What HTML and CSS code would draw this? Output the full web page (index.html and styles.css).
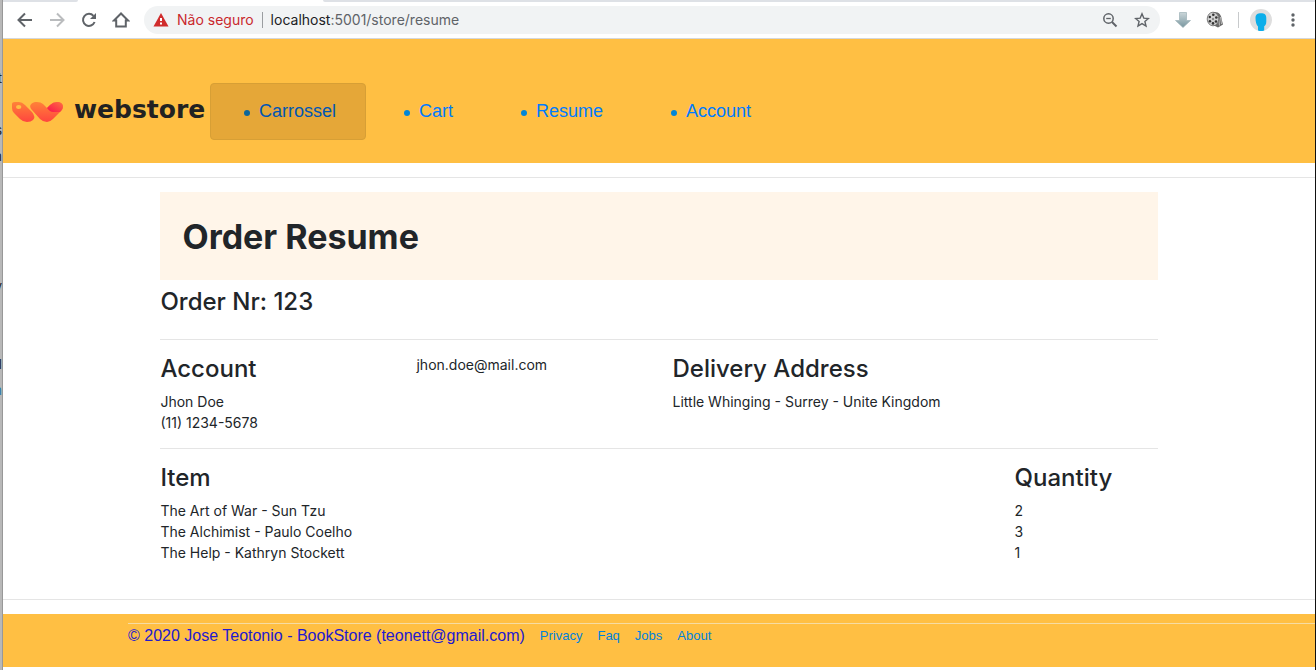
FILE: index.html
```html
<!DOCTYPE html>
<html lang="en">
<head>
<meta charset="utf-8">
<meta name="viewport" content="width=device-width, initial-scale=1">
<title>Order Resume</title>
<link rel="stylesheet" href="styles.css">
</head>
<body>
<div class="desktop">
  <div class="behind" aria-hidden="true">
    <span>t</span><span></span><span>s</span><span>n</span><span></span><span></span><span></span><span></span><span>v</span><span></span><span></span><span>I</span><span class="behind-link">n</span>
  </div>
  <div class="window">
    <div class="tabs"><div class="tab-left"></div><div class="tab-right"></div></div>
    <div class="toolbar">
      <button class="tool" aria-label="Back"><svg width="18" height="18" viewBox="0 0 18 18"><path d="M16 9H3M9 2.500L2.500 9L9 15.500" fill="none" stroke="#5f6368" stroke-width="2"/></svg></button>
      <button class="tool" aria-label="Forward"><svg width="18" height="18" viewBox="0 0 18 18"><path d="M2 9H15M9 2.500L15.500 9L9 15.500" fill="none" stroke="#babcbe" stroke-width="2"/></svg></button>
      <button class="tool" aria-label="Reload"><svg width="18" height="18" viewBox="0 0 18 18"><path d="M14.600 11A6 6 0 1 1 13.500 4.900" fill="none" stroke="#5f6368" stroke-width="2"/><path d="M16 2V8H10Z" fill="#5f6368"/></svg></button>
      <button class="tool" aria-label="Home"><svg width="18" height="18" viewBox="0 0 18 18"><path d="M2 9.500L9 2.500L16 9.500H13.800V15.500H4.200V9.500Z" fill="none" stroke="#5f6368" stroke-width="2"/></svg></button>
      <div class="omnibox">
        <svg width="16" height="14" viewBox="0 0 16 14"><path d="M8 0L15.500 13.500H.5Z" fill="#d02c2c"/><path d="M7 5H9V8H7ZM7 9.500H9V11.500H7Z" fill="#fff"/></svg>
        <span class="insecure">Não seguro</span>
        <span class="address"><span class="host">localhost</span>:5001/store/resume</span>
        <button class="tool" aria-label="Zoom out"><svg width="16" height="16" viewBox="0 0 16 16"><circle cx="6.500" cy="6.500" r="4.700" fill="none" stroke="#5f6368" stroke-width="1.500"/><path d="M10 10L14.500 14.500" stroke="#5f6368" stroke-width="2"/><path d="M4.200 6.500H8.800" stroke="#5f6368" stroke-width="1.300"/></svg></button>
        <button class="tool" aria-label="Bookmark"><svg width="16" height="16" viewBox="0 0 16 16"><path d="M8 1.800L9.800 6.100L14.400 6.500L10.900 9.500L12 14L8 11.600L4 14L5.100 9.500L1.600 6.500L6.200 6.100Z" fill="none" stroke="#5f6368" stroke-width="1.400"/></svg></button>
      </div>
      <button class="tool" aria-label="Downloads"><svg width="18" height="18" viewBox="0 0 18 18"><defs><linearGradient id="dl" x1="0" y1="0" x2="0" y2="1"><stop offset="0" stop-color="#cbd6d9"/><stop offset="1" stop-color="#78969f"/></linearGradient></defs><path d="M5.500 1.500H12.500V9.500H16.500L9 16.500L1.500 9.500H5.500Z" fill="url(#dl)" stroke="#9eb2b8" stroke-width=".7"/></svg></button>
      <button class="tool" aria-label="Video"><svg width="18" height="18" viewBox="0 0 18 18"><path d="M7 1.200C13 .500 15.500 4 15.800 9L17 13.500L12 16.500L7 14Z" fill="#6a6a6a"/><path d="M12.500 5L13.500 14.500M14.500 6L15.500 13" stroke="#c4c4c4" stroke-width=".9"/><ellipse cx="7" cy="8" rx="5.800" ry="6.800" fill="#cfcfcf" stroke="#666" stroke-width=".8"/><g fill="#333"><circle cx="7.300" cy="3.800" r="1.300"/><circle cx="3.800" cy="6" r="1.200"/><circle cx="10.300" cy="6.500" r="1.300"/><circle cx="3.900" cy="10.300" r="1.300"/><circle cx="7" cy="12.400" r="1.300"/><circle cx="10" cy="10.500" r="1.300"/><circle cx="7" cy="8" r=".8"/></g></svg></button>
      <span class="divider"></span>
      <button class="tool avatar" aria-label="Profile"><svg width="22" height="22" viewBox="0 0 22 22"><circle cx="11" cy="11" r="11" fill="#dedede"/><path d="M5.500 9C5.500 5.500 7.500 4.300 11 4.300S16.300 5.500 16.300 9V12.500C16.300 15 15.500 16.500 14.200 17.300V21.500Q11 22.500 8 21.500V17.500C6.300 16 5.500 12.500 5.500 9Z" fill="#0caeea"/></svg></button>
      <button class="tool" aria-label="Menu"><svg width="18" height="18" viewBox="0 0 18 18" fill="#5f6368"><circle cx="9" cy="4" r="1.700"/><circle cx="9" cy="9" r="1.700"/><circle cx="9" cy="14" r="1.700"/></svg></button>
    </div>

    <header class="site-header">
      <a class="brand" href="#">
        <svg width="52" height="22" viewBox="0 0 52 22"><defs><linearGradient id="lg" x1="0" y1="0" x2="0" y2="1"><stop offset="0" stop-color="#ff8238"/><stop offset="1" stop-color="#ff453f"/></linearGradient><linearGradient id="tip" x1="1" y1="0" x2="0" y2="1"><stop offset="0" stop-color="#ff7040"/><stop offset="1" stop-color="#f9104d"/></linearGradient></defs><path fill-rule="evenodd" d="M0 3Q0 1 3 1H7Q10 1 13 4L20 11Q24 16 21 19Q19 21 15 21Q11 21 8 18L2 12Q0 10 0 7ZM4 6A2.700 2 0 1 0 9.400 6A2.700 2 0 1 0 4 6Z" fill="url(#lg)"/><path d="M20 9C16 5 19 1 25 1Q29 1 31 3L35 7L38 4Q41 1 45 1C51 1 53 6 49 10L41 18Q38 21 35 21Q31 21 28 18Z" fill="url(#lg)"/><path d="M35 7L38 4Q41 1 45 1C51 1 53 6 48 11H41Q38 11 35 7Z" fill="url(#tip)"/></svg>
        <span>webstore</span>
      </a>
      <nav>
        <ul class="menu">
          <li><a class="active" href="#">Carrossel</a></li>
          <li><a href="#">Cart</a></li>
          <li><a href="#">Resume</a></li>
          <li><a href="#">Account</a></li>
        </ul>
      </nav>
    </header>
    <hr class="rule">
    <main class="order">
      <div class="banner"><h1>Order Resume</h1></div>
      <h2>Order Nr: 123</h2>
      <section class="row details">
        <div class="quarter"><h2>Account</h2><p>Jhon Doe</p><p>(11) 1234-5678</p></div>
        <div class="quarter"><p>jhon.doe@mail.com</p></div>
        <div class="half"><h2>Delivery Address</h2><p>Little Whinging - Surrey - Unite Kingdom</p></div>
      </section>
      <table class="items">
        <thead><tr><th>Item</th><th class="qty">Quantity</th></tr></thead>
        <tbody>
          <tr><td>The Art of War - Sun Tzu</td><td>2</td></tr>
          <tr><td>The Alchimist - Paulo Coelho</td><td>3</td></tr>
          <tr><td>The Help - Kathryn Stockett</td><td>1</td></tr>
        </tbody>
      </table>
    </main>
    <hr class="rule">
    <footer class="site-footer">
      <div class="footer-line">
        <span class="copyright">© 2020 Jose Teotonio - BookStore (teonett@gmail.com)</span>
        <a href="#">Privacy</a><a href="#">Faq</a><a href="#">Jobs</a><a href="#">About</a>
      </div>
    </footer>
  </div>
</div>
</body>
</html>
```
FILE: styles.css
```css
* { box-sizing: border-box; }
body {
  margin: 0;
  background: #fff;
  color: #212529;
  font: 14px/21px Inter, sans-serif;
}
h1, h2, p, ul { margin: 0; padding: 0; }
a { text-decoration: none; color: #007bff; }

.desktop {
  display: grid;
  grid-template-columns: 3px minmax(0, 1fr);
  min-height: 100vh;
  border-right: 1px solid #111;
}
.behind {
  display: flex;
  flex-direction: column;
  padding-top: 65px;
  overflow: hidden;
  background: #b8b8b8;
  border-right: 1px solid #989898;
  font-size: 13px;
  line-height: 26px;
}
.behind span { height: 26px; align-self: flex-end; }
.behind-link { color: #2878a8; }

.tabs { display: flex; justify-content: space-between; height: 2px; }
.tab-left { width: 75px; background: #dee1e6; border-bottom-right-radius: 3px; }
.tab-right { width: calc(100% - 320px); background: #dee1e6; border-bottom-left-radius: 3px; }
.toolbar {
  display: flex;
  align-items: center;
  gap: 14px;
  height: 37px;
  padding: 0 13px;
  border-bottom: 1px solid #d5d7da;
}
.tool {
  display: flex;
  padding: 0;
  border: 0;
  background: none;
}
.avatar { margin: 0 -2px 0 -3px; }
.omnibox {
  display: flex;
  flex: 1;
  align-items: center;
  gap: 8px;
  height: 28px;
  padding: 0 10px 0 9px;
  border-radius: 14px;
  background: #f1f3f4;
  line-height: 16px;
}
.omnibox .tool + .tool { margin-left: 8px; }
.insecure { padding-right: 8px; border-right: 1px solid #9a9da0; color: #c9282d; }
.address { flex: 1; color: #5f6368; }
.host { color: #202124; }
.divider { width: 1px; height: 16px; background: #c8cacc; }

.site-header {
  display: flex;
  align-items: center;
  padding: 44px 9px 23px;
  background: #ffbf43;
}
.brand {
  display: flex;
  align-items: center;
  gap: 10px;
  width: 198px;
  color: #222;
  font: bold 25px/24px "DejaVu Sans", sans-serif;
}
.brand span { padding-bottom: 3px; }
.menu { display: flex; gap: 4px; list-style: none; }
.menu a {
  display: flex;
  align-items: center;
  gap: 9px;
  height: 57px;
  padding: 0 29px 0 33px;
  border: 1px solid transparent;
  border-radius: 4px;
  font: 18px/27px "Liberation Sans", Arial, sans-serif;
}
.menu a::before {
  content: "";
  width: 6px;
  height: 6px;
  margin-top: 3px;
  border-radius: 50%;
  background: #0086d8;
}
.menu .active { border-color: #d79f35; background: #e5a738; color: #0056b3; }
.menu .active::before { background: #0c669a; }

.rule { height: 1px; margin: 14px 0; border: 0; background: #e5e5e5; }
.order { padding: 0 12%; }
.banner { padding: 23px 22px 21px; background: #fff5e9; }
h1 { font-size: 34px; line-height: 44px; font-weight: 700; }
h2, th { font-size: 24px; line-height: 30px; font-weight: 500; }
.banner + h2 { margin: 7px 0 22px; }
.row {
  display: grid;
  grid-template-columns: repeat(12, minmax(0, 1fr));
  column-gap: 27px;
}
.details, .items { border-top: 1px solid #e5e5e5; }
.details { padding: 14px 0 15px; }
.details h2 { margin-bottom: 7px; }
.quarter { grid-column: span 3; }
.half { grid-column: span 6; }
.items {
  width: 100%;
  margin-bottom: 36px;
  border-collapse: separate;
  border-spacing: 0;
  table-layout: fixed;
}
.items th { padding: 14px 0 7px; text-align: left; }
.items td { padding: 0; }
.qty { width: 143px; }

.site-footer {
  padding: 9px 0 20px 125px;
  background: #ffbf43;
  font-family: "Liberation Sans", Arial, sans-serif;
}
.footer-line {
  display: flex;
  align-items: center;
  gap: 15px;
  height: 24px;
  border-top: 1px solid #f6dca3;
}
.copyright { color: #2219cf; font-size: 16px; }
.footer-line a { color: #0082dd; font-size: 13px; }
```
